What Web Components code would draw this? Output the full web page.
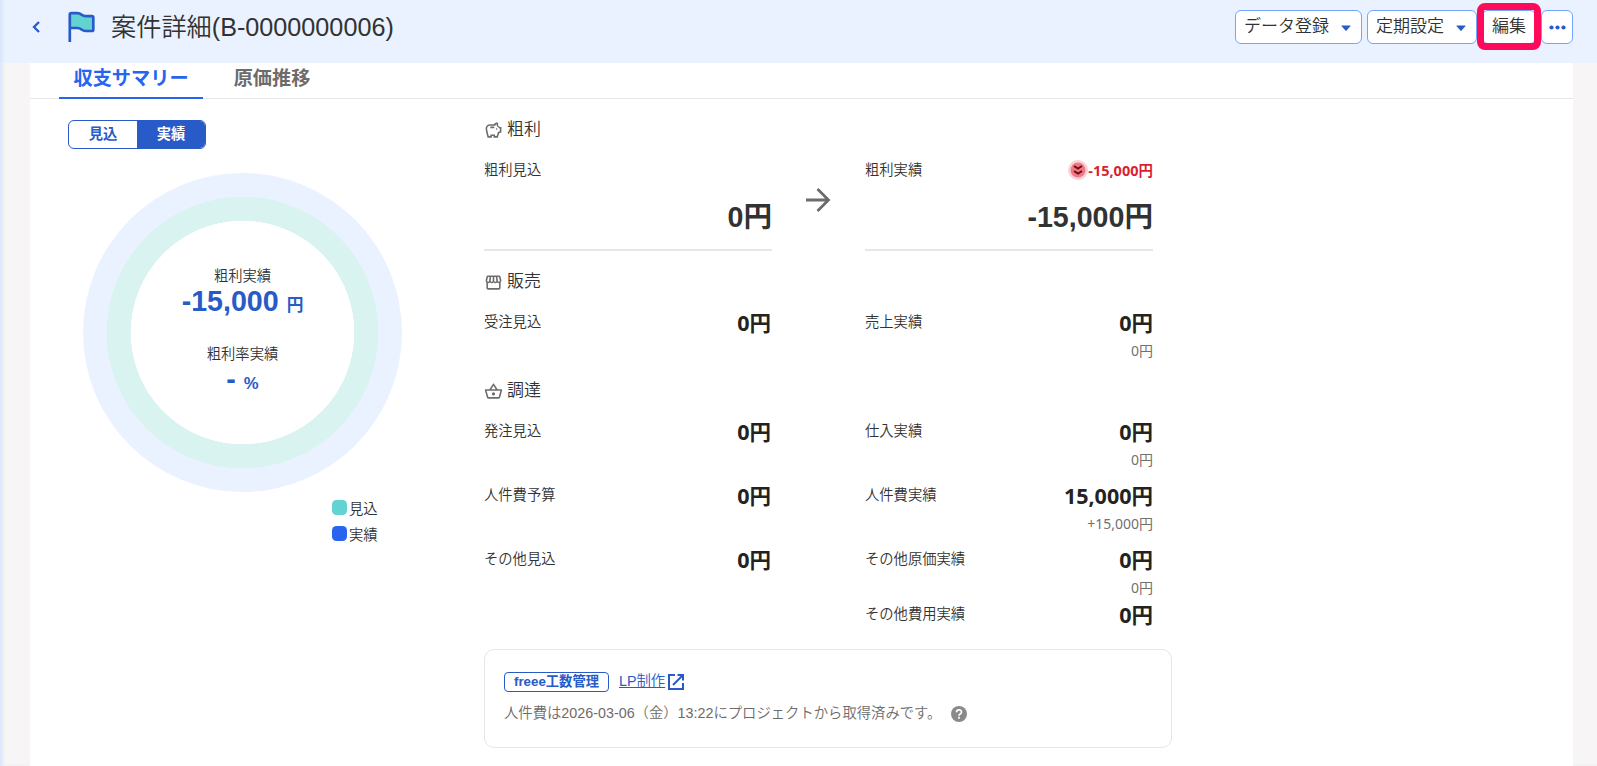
<!DOCTYPE html>
<html lang="ja">
<head>
<meta charset="utf-8">
<title>案件詳細</title>
<style>
    body {
        margin: 0;
        height: 766px;
        overflow: hidden;
        background: #f7f5f5;
        color: #323232;
        font-family: "Liberation Sans", "Noto Sans CJK JP", sans-serif;
    }
</style>
</head>
<body>
<deal-page>
    <page-header slot="header" heading="案件詳細(B-0000000006)">
        <header-button menu style="width: 127px">データ登録</header-button>
        <header-button menu style="width: 110px">定期設定</header-button>
        <header-button marked style="width: 54px">編集</header-button>
        <header-button more style="width: 32px"></header-button>
    </page-header>
    <tab-bar slot="tabs">
        <tab-item active>収支サマリー</tab-item>
        <tab-item>原価推移</tab-item>
    </tab-bar>
    <profit-chart slot="side"></profit-chart>
    <summary-section icon="savings" heading="粗利">
        <profit-totals></profit-totals>
    </summary-section>
    <summary-section icon="store" heading="販売" style="margin-top: 18px">
        <amount-row label="受注見込" amount="0円" label2="売上実績" amount2="0円" diff="0円"></amount-row>
    </summary-section>
    <summary-section icon="basket" heading="調達" style="margin-top: 5px">
        <amount-row label="発注見込" amount="0円" label2="仕入実績" amount2="0円" diff="0円"></amount-row>
        <amount-row label="人件費予算" amount="0円" label2="人件費実績" amount2="15,000円" diff="+15,000円"></amount-row>
        <amount-row label="その他見込" amount="0円" label2="その他原価実績" amount2="0円" diff="0円" style="height: 55px"></amount-row>
        <amount-row label2="その他費用実績" amount2="0円" style="height: 26px"></amount-row>
    </summary-section>
    <sync-note tag="freee工数管理" project="LP制作">人件費は2026-03-06（金）13:22にプロジェクトから取得済みです。</sync-note>
</deal-page>

<script>
const ICONS = {
    savings: "M15 10c0-.55.45-1 1-1s1 .45 1 1-.45 1-1 1-1-.45-1-1zM8 9h5V7H8v2zm14-1.5v6.97l-2.82.94L17.5 21H12v-2h-2v2H4.5S2 12.54 2 9.5 4.46 4 7.5 4h5c.91-1.21 2.36-2 4-2 .83 0 1.5.67 1.5 1.5 0 .21-.04.41-.12.58-.14.34-.26.73-.32 1.15l2.27 2.27H22zm-2 2h-.5L16 5.99c0-.65.09-1.29.26-1.91-.97.25-1.76.97-2.09 1.92H7.5C5.57 6 4 7.57 4 9.5c0 1.88 1.22 6.65 2.01 9.5H8v-2h6v2h2.01l1.55-5.15 2.44-.82V9.5z",
    store: "M21.9 8.89l-1.05-4.37c-.22-.9-1-1.52-1.91-1.52H5.05c-.9 0-1.69.63-1.9 1.52L2.1 8.89c-.24 1.02-.02 2.06.62 2.88.08.11.19.19.28.29V19c0 1.1.9 2 2 2h14c1.1 0 2-.9 2-2v-6.94c.09-.09.2-.18.28-.28.64-.82.87-1.87.62-2.89zM18.91 4.99l1.05 4.37c.1.42.01.84-.25 1.17-.14.18-.44.47-.94.47-.61 0-1.14-.49-1.21-1.14L16.98 5l1.93-.01zM13 5h1.96l.54 4.52c.05.39-.07.78-.33 1.07-.22.26-.54.41-.95.41-.67 0-1.22-.59-1.22-1.31V5zM8.49 9.52L9.04 5H11v4.69c0 .72-.55 1.31-1.29 1.31-.34 0-.65-.15-.89-.41-.25-.29-.37-.68-.33-1.07zm-4.45-.16L5.05 5h1.97l-.58 4.86c-.08.65-.6 1.14-1.21 1.14-.49 0-.8-.29-.93-.47-.27-.32-.36-.75-.26-1.17zM5 19v-6.03c.08.01.15.03.23.03.87 0 1.66-.36 2.24-.95.6.6 1.4.95 2.31.95.87 0 1.65-.36 2.23-.93.59.57 1.39.93 2.29.93.84 0 1.64-.35 2.24-.95.58.59 1.37.95 2.24.95.08 0 .15-.02.23-.03V19H5z",
    basket: "M22 9h-4.79l-4.38-6.56c-.19-.28-.51-.42-.83-.42s-.64.14-.83.43L6.79 9H2c-.55 0-1 .45-1 1 0 .09.01.18.04.27l2.54 9.27c.23.84 1 1.46 1.92 1.46h13c.92 0 1.69-.62 1.93-1.46l2.54-9.27L23 10c0-.55-.45-1-1-1zM12 4.8L14.8 9H9.2L12 4.8zM18.5 19l-12.99.01L3.31 11H20.7l-2.2 8zM12 13c-1.1 0-2 .9-2 2s.9 2 2 2 2-.9 2-2-.9-2-2-2z"
};

class BaseElement extends HTMLElement {
    constructor() {
        super();
        this._shadowRoot = this.attachShadow({mode: "open"});
    }

    connectedCallback() {
        this._shadowRoot.innerHTML = this.render();
    }

    attr(name) {
        return this.getAttribute(name) || "";
    }
}

class DealPage extends BaseElement {
    render() {
        return `
            <style>
                :host {
                    display: block;
                    height: 766px;
                    box-shadow: inset 4px 0 4px -2px #d3e2fd;
                }

                .sheet {
                    margin: 0 24px 0 30px;
                    height: 703px;
                    background: #fff;
                }

                .content {
                    display: flex;
                }

                .side {
                    width: 454px;
                }

                .main {
                    padding-top: 18px;
                    width: 688px;
                }
            </style>

            <slot name="header"></slot>
            <div class="sheet">
                <slot name="tabs"></slot>
                <div class="content">
                    <div class="side"><slot name="side"></slot></div>
                    <div class="main"><slot></slot></div>
                </div>
            </div>
        `;
    }
}

class PageHeader extends BaseElement {
    render() {
        return `
            <style>
                :host {
                    display: flex;
                    align-items: center;
                    box-sizing: border-box;
                    height: 63px;
                    padding: 0 24px 9px 31px;
                    background: linear-gradient(90deg, #d6e4fd 0, #eaf2ff 5px);
                }

                h1 {
                    flex: 1;
                    margin: 0 0 1px 15px;
                    font-size: 25.200px;
                    line-height: 36px;
                    font-weight: 350;
                }

                .flag {
                    margin-left: 26px;
                }

                .actions {
                    display: flex;
                    gap: 5px;
                }
            </style>

            <svg width="10" height="14" viewBox="0 0 10 14" fill="none" stroke="#285ac8" stroke-width="2.300">
                <path d="M8 2 3 7l5 5"/>
            </svg>
            <svg class="flag" width="29" height="32" viewBox="0 0 29 32" fill="#62d2d2" stroke="#285ac8" stroke-width="2.700" stroke-linejoin="round">
                <path d="M2.800 31V3.500q0-1.300 1.600-1.300H10.500q2 0 4 1.500t4 1.500h6.300q1.500 0 1.500 1.500V18.500q0 1.500-1.500 1.500h-6.300q-2 0-4-1.500t-4-1.500H2.800"/>
            </svg>
            <h1>${this.attr("heading")}</h1>
            <div class="actions"><slot></slot></div>
        `;
    }
}

class HeaderButton extends BaseElement {
    render() {
        let extra = "";
        if (this.hasAttribute("menu")) {
            extra = `<svg width="10" height="6" viewBox="0 0 10 6" fill="#285ac8"><path d="M1 .5h8q.8.2.3.800L5.600 5.500q-.6.500-1.200 0L.7 1.300Q.2.700 1 .5z"/></svg>`;
        }
        if (this.hasAttribute("more")) {
            extra = `<svg class="dots" width="17" height="5" viewBox="0 0 17 5" fill="#285ac8"><circle cx="2.500" cy="2.500" r="2.100"/><circle cx="8.500" cy="2.500" r="2.100"/><circle cx="14.500" cy="2.500" r="2.100"/></svg>`;
        }
        return `
            <style>
                :host {
                    position: relative;
                    display: flex;
                    align-items: center;
                    justify-content: center;
                    box-sizing: border-box;
                    height: 34px;
                    border: 1px solid #73a5ff;
                    border-radius: 6px;
                    background: #fff;
                    font-size: 17px;
                    font-weight: 350;
                }

                :host([menu]) {
                    justify-content: space-between;
                    padding: 0 10px 0 8px;
                }

                .text {
                    line-height: 24px;
                    padding-bottom: 1px;
                }

                svg {
                    margin-top: 2px;
                }

                .dots {
                    margin-top: 1px;
                }

                .text:has(+ .dots) {
                    display: none;
                }

                /* callout frame drawn round the button */
                .mark {
                    position: absolute;
                    inset: -8px -6px -7px -6px;
                    border: 7px solid #ff0a5a;
                    border-radius: 8px;
                    z-index: 1;
                }
            </style>

            <span class="text"><slot></slot></span>${extra}
            ${this.hasAttribute("marked") ? `<div class="mark"></div>` : ""}
        `;
    }
}

class TabBar extends BaseElement {
    render() {
        return `
            <style>
                :host {
                    display: flex;
                    box-sizing: border-box;
                    height: 36px;
                    padding-left: 29px;
                    border-bottom: 1px solid #e6e6e6;
                }
            </style>

            <slot></slot>
        `;
    }
}

class TabItem extends BaseElement {
    render() {
        return `
            <style>
                :host {
                    display: block;
                    box-sizing: border-box;
                    height: 36px;
                    padding: 0 14.500px;
                    margin-right: 16px;
                    color: #6e6b6b;
                    font-size: 19.200px;
                    font-weight: bold;
                    line-height: 32px;
                }

                :host([active]) {
                    color: #2864f0;
                    border-bottom: 2px solid #2864f0;
                }
            </style>

            <slot></slot>
        `;
    }
}

class ProfitChart extends BaseElement {
    render() {
        return `
            <style>
                :host {
                    display: block;
                    padding: 21px 0 0 38px;
                }

                .toggle {
                    display: flex;
                    box-sizing: border-box;
                    width: 138px;
                    height: 29px;
                    border: 1px solid #285ac8;
                    border-radius: 6px;
                    overflow: hidden;
                    font-size: 14.300px;
                    font-weight: bold;
                    line-height: 26px;
                    text-align: center;
                    color: #285ac8;
                }

                .toggle span {
                    flex: 1;
                }

                .toggle .on {
                    background: #285ac8;
                    color: #fff;
                }

                .ring {
                    display: flex;
                    flex-direction: column;
                    align-items: center;
                    box-sizing: border-box;
                    width: 319px;
                    height: 319px;
                    margin: 24px 0 0 15px;
                    padding-top: 92px;
                    border-radius: 50%;
                    background: radial-gradient(closest-side, #fff 111.500px, #d9f3f1 112px, #d9f3f1 135.500px, #eaf2ff 136px);
                    font-size: 14.300px;
                    font-weight: 350;
                    line-height: 22px;
                }

                .value {
                    color: #285ac8;
                    font-size: 28.600px;
                    font-weight: bold;
                    line-height: 28px;
                    white-space: pre;
                }

                .value small {
                    font-size: 16.700px;
                }

                .rate {
                    margin-top: 23px;
                }

                ul {
                    margin: 4px 0 0 264px;
                    padding: 0;
                    list-style: none;
                    font-size: 14.300px;
                    font-weight: 350;
                    line-height: 26px;
                }

                li {
                    display: flex;
                    align-items: center;
                    gap: 2px;
                }

                li::before {
                    content: "";
                    width: 15px;
                    height: 15px;
                    margin-bottom: 3px;
                    border-radius: 4.500px;
                    background: var(--swatch);
                }
            </style>

            <div class="toggle"><span>見込</span><span class="on">実績</span></div>
            <div class="ring">
                <div>粗利実績</div>
                <div class="value">-15,000 <small>円</small></div>
                <div class="rate">粗利率実績</div>
                <div class="value">- <small>%</small></div>
            </div>
            <ul>
                <li style="--swatch: #62d2d2">見込</li>
                <li style="--swatch: #2864f0">実績</li>
            </ul>
        `;
    }
}

class SummarySection extends BaseElement {
    render() {
        return `
            <style>
                :host {
                    display: block;
                }

                h2 {
                    display: flex;
                    align-items: center;
                    gap: 4px;
                    height: 26px;
                    margin: 0 0 14px;
                    font-size: 17px;
                    font-weight: 350;
                    line-height: 28px;
                }

                svg {
                    margin-top: 1px;
                    fill: #6e6b6b;
                }
            </style>

            <h2><svg width="19" height="19" viewBox="0 0 24 24"><path d="${ICONS[this.attr("icon")]}"/></svg>${this.attr("heading")}</h2>
            <slot></slot>
        `;
    }
}

class ProfitTotals extends BaseElement {
    render() {
        return `
            <style>
                :host {
                    display: flex;
                    font-size: 14.300px;
                    font-weight: 350;
                }

                .total {
                    box-sizing: border-box;
                    width: 288px;
                    height: 94px;
                    border-bottom: 2px solid #e6e6e6;
                }

                .label {
                    display: flex;
                    justify-content: space-between;
                    line-height: 26px;
                }

                .delta {
                    display: flex;
                    align-items: center;
                    height: 26px;
                    color: #dc1e32;
                    font-family: "Noto Sans", "Noto Sans CJK JP", sans-serif;
                    font-size: 14.500px;
                    font-weight: bold;
                    line-height: 28px;
                }

                .big {
                    margin-top: 14px;
                    font-size: 28.600px;
                    font-weight: bold;
                    line-height: 40px;
                    text-align: right;
                }

                .total:first-child .big {
                    margin-right: 1px;
                }

                .arrow {
                    width: 93px;
                    padding: 30px 0 0 33px;
                    box-sizing: border-box;
                }
            </style>

            <div class="total">
                <div class="label">粗利見込</div>
                <div class="big">0円</div>
            </div>
            <div class="arrow">
                <svg width="26" height="26" viewBox="0 0 26 26" fill="none" stroke="#6e6b6b" stroke-width="2.800">
                    <path d="M1 13h23M12.500 2 23.500 13 12.500 24"/>
                </svg>
            </div>
            <div class="total">
                <div class="label">
                    粗利実績
                    <span class="delta">
                        <svg width="20" height="20" viewBox="0 0 20 20">
                            <circle cx="10" cy="10" r="10" fill="#fad2d7"/>
                            <circle cx="10" cy="10" r="7.500" fill="#f07882"/>
                            <path d="M6 6l4 2.500L14 6M6 11l4 2.500 4-2.500" fill="none" stroke="#6e0a19" stroke-width="2"/>
                        </svg>-15,000円
                    </span>
                </div>
                <div class="big">-15,000円</div>
            </div>
        `;
    }
}

class AmountRow extends BaseElement {
    render() {
        return `
            <style>
                :host {
                    display: grid;
                    grid-template-columns: 288px 288px;
                    gap: 93px;
                    height: 64px;
                    font-size: 14.300px;
                    font-weight: 350;
                    line-height: 26px;
                }

                .cell {
                    display: flex;
                    justify-content: space-between;
                }

                .amounts {
                    font-family: "Noto Sans", "Noto Sans CJK JP", sans-serif;
                    text-align: right;
                }

                .cell:first-of-type .amounts {
                    margin-right: 1px;
                }

                .amount {
                    height: 29px;
                    color: #232323;
                    font-size: 21.500px;
                    font-weight: bold;
                    line-height: 28px;
                }

                .diff {
                    color: #737070;
                    font-size: 14px;
                    font-weight: 400;
                }
            </style>

            <div class="cell">
                ${this.attr("label")}
                <div class="amounts"><div class="amount">${this.attr("amount")}</div></div>
            </div>
            <div class="cell">
                ${this.attr("label2")}
                <div class="amounts">
                    <div class="amount">${this.attr("amount2")}</div>
                    <div class="diff">${this.attr("diff")}</div>
                </div>
            </div>
        `;
    }
}

class SyncNote extends BaseElement {
    render() {
        return `
            <style>
                :host {
                    display: block;
                    box-sizing: border-box;
                    width: 688px;
                    height: 99px;
                    margin-top: 22px;
                    padding: 20px 19px;
                    border: 1px solid #e6e6e6;
                    border-radius: 10px;
                    font-size: 14.340px;
                    font-weight: 350;
                    color: #6e6b6b;
                }

                div {
                    display: flex;
                    align-items: center;
                    height: 24px;
                }

                .tag {
                    box-sizing: border-box;
                    height: 20px;
                    margin-right: 10px;
                    padding: 0 9px;
                    border: 1px solid #285ac8;
                    border-radius: 4px;
                    color: #285ac8;
                    font-size: 13.300px;
                    font-weight: bold;
                    line-height: 17px;
                }

                a {
                    height: 24px;
                    color: #285ac8;
                    line-height: 22px;
                    text-decoration: underline;
                    margin-right: 3px;
                }

                .note {
                    margin-top: 5px;
                }

                .help {
                    margin: 6px 0 0 10px;
                }
            </style>

            <div>
                <span class="tag">${this.attr("tag")}</span>
                <a>${this.attr("project")}</a>
                <svg width="16" height="16" viewBox="0 0 16 16" fill="none" stroke="#285ac8" stroke-width="2">
                    <path d="M7 1H1v14h14V9M9.500 1H15v5.500M15 1 5 11"/>
                </svg>
            </div>
            <div class="note">
                <slot></slot>
                <svg class="help" width="16" height="16" viewBox="0 0 16 16">
                    <circle cx="8" cy="8" r="8" fill="#8c8989"/>
                    <path d="M5.500 6.200Q5.600 3.900 8 3.900t2.500 2.100Q10.500 7.200 9.200 7.900 8 8.600 8 9.700M8 10.800v1.900" fill="none" stroke="#fff" stroke-width="1.700"/>
                </svg>
            </div>
        `;
    }
}

customElements.define("deal-page", DealPage);
customElements.define("page-header", PageHeader);
customElements.define("header-button", HeaderButton);
customElements.define("tab-bar", TabBar);
customElements.define("tab-item", TabItem);
customElements.define("profit-chart", ProfitChart);
customElements.define("summary-section", SummarySection);
customElements.define("profit-totals", ProfitTotals);
customElements.define("amount-row", AmountRow);
customElements.define("sync-note", SyncNote);
</script>
</body>
</html>
